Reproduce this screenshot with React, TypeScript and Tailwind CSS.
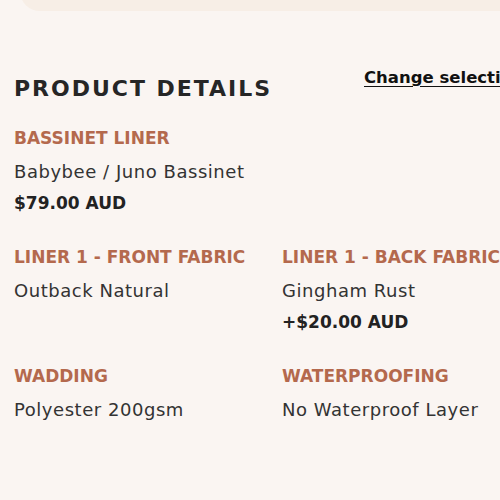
const details = [
  { label: "BASSINET LINER", value: "Babybee / Juno Bassinet", price: "$79.00 AUD" },
  { label: "", value: "", price: "" },
  { label: "LINER 1 - FRONT FABRIC", value: "Outback Natural", price: "" },
  { label: "LINER 1 - BACK FABRIC", value: "Gingham Rust", price: "+$20.00 AUD" },
  { label: "WADDING", value: "Polyester 200gsm", price: "" },
  { label: "WATERPROOFING", value: "No Waterproof Layer", price: "" },
]

function DetailItem({ label, value, price }: { label: string; value: string; price: string }) {
  if (!label) return <div />
  return (
    <div className="flex flex-col">
      <div className="text-[17px] leading-[20px] font-bold text-[#b4694d] whitespace-nowrap mb-[10px]">{label}</div>
      <div className="text-[18px] leading-[28px] tracking-[0.03em] text-[#333333] whitespace-nowrap">{value}</div>
      {price && (
        <div className="mt-[3px] text-[17px] leading-[28px] font-bold text-[#222222] whitespace-nowrap">{price}</div>
      )}
    </div>
  )
}

export default function App() {
  return (
    <div
      className="w-full h-[500px] overflow-hidden bg-[#faf5f2]"
      style={{ fontFamily: "'DejaVu Sans', Inter, sans-serif" }}
    >
      <div className="w-[560px]">
        {/* bottom of the card above */}
        <div className="-mt-[29px] h-[40px] ml-[20px] rounded-bl-[20px] bg-[#f7eee6]" />

        <div className="px-[14px] pt-[54px]">
          <div className="flex items-start">
            <h2 className="w-[350px] pt-[10px] text-[22px] leading-[28px] font-bold tracking-[0.09em] text-[#262626]">
              PRODUCT DETAILS
            </h2>
            <a href="#" className="text-[16.5px] leading-[25px] font-bold text-[#111111] underline underline-offset-[3px] whitespace-nowrap">
              Change selection
            </a>
          </div>

          <div className="mt-[25px] grid grid-cols-[268px_268px] gap-y-[30px]">
            {details.map((d, i) => (
              <DetailItem key={i} {...d} />
            ))}
          </div>

          <h2 className="mt-[72px] text-[22px] leading-[28px] font-bold tracking-[0.09em] text-[#262626]">
            ORDER SUMMARY
          </h2>
        </div>
      </div>
    </div>
  )
}
